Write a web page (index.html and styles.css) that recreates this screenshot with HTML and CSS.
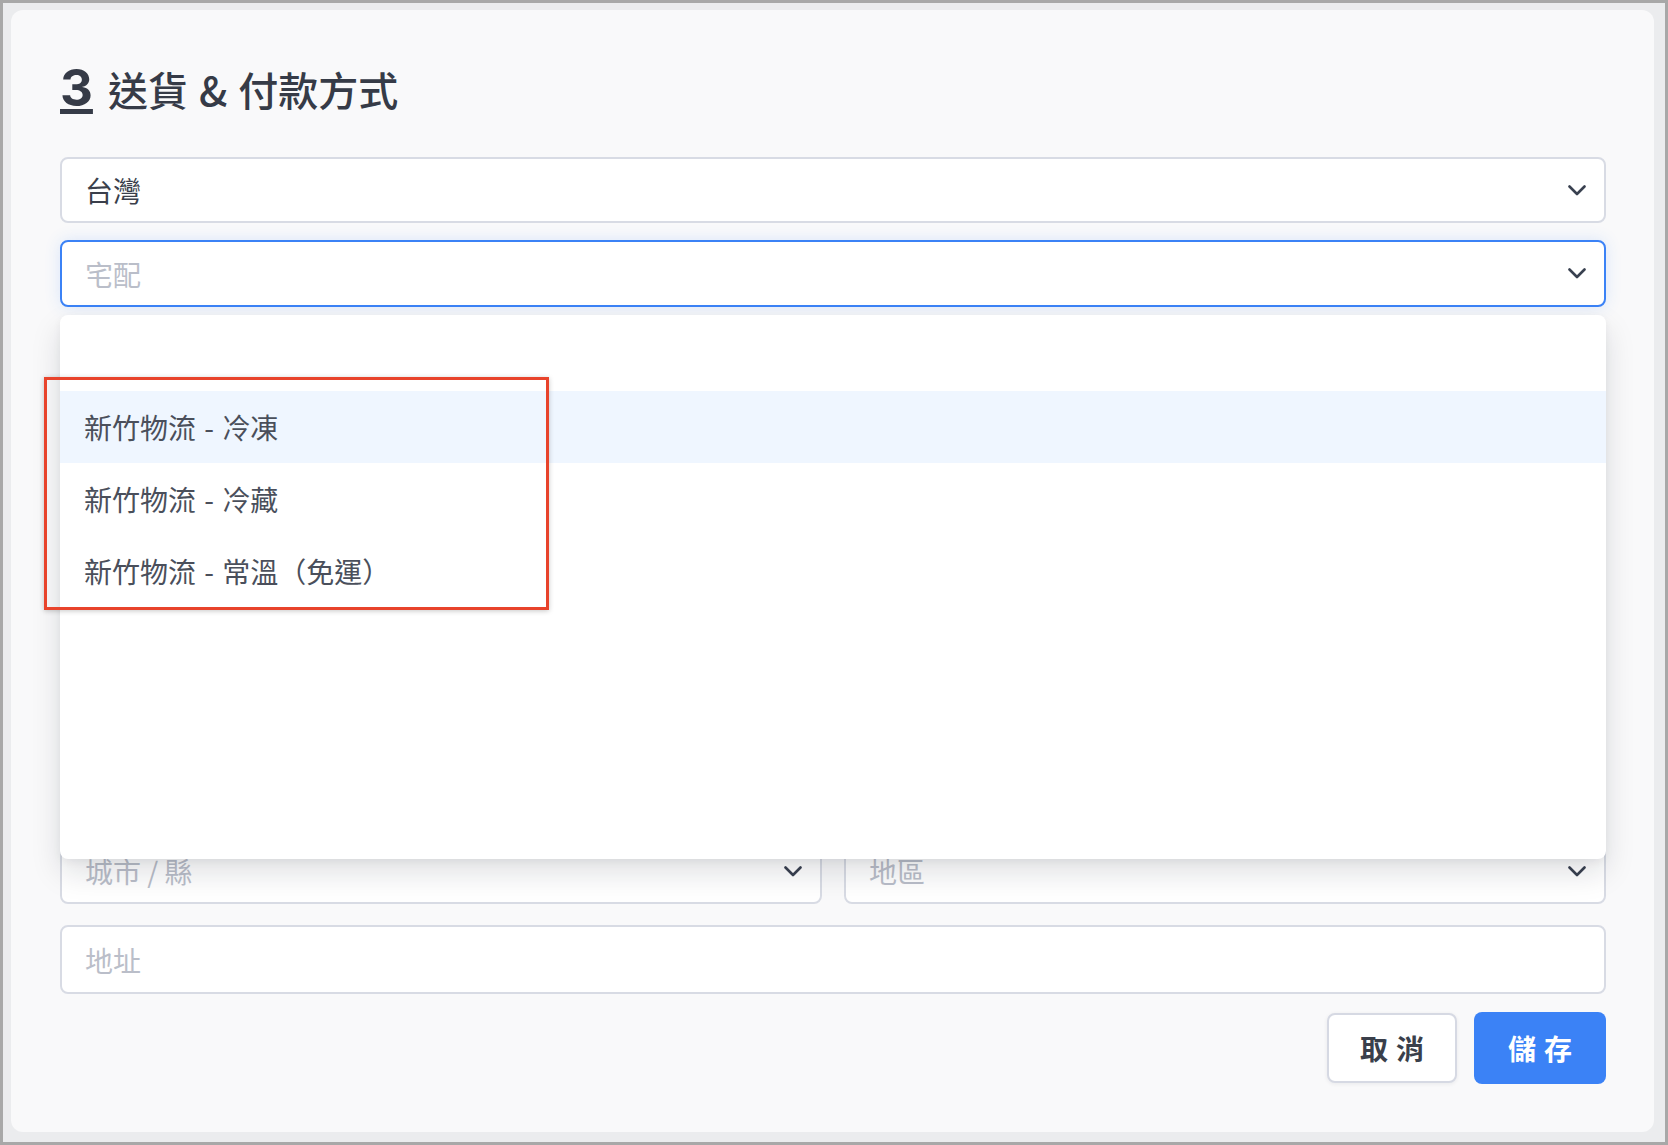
FILE: index.html
```html
<!DOCTYPE html>
<html lang="zh-Hant">
<head>
<meta charset="utf-8">
<title>送貨 &amp; 付款方式</title>
<link rel="stylesheet" href="styles.css">
</head>
<body>
<div class="frame">
  <div class="card">
    <h2 class="title"><span class="num">3</span><span class="title-text">送貨 &amp; 付款方式</span></h2>
    <div class="fields">
      <div class="select">
        <span class="value">台灣</span>
        <svg class="chev" width="18" height="11" viewBox="0 0 18 11"><path d="M1.5 1.5 L9 9 L16.5 1.5"/></svg>
      </div>
      <div class="select-wrap">
        <div class="select focused">
          <span class="placeholder">宅配</span>
          <svg class="chev" width="18" height="11" viewBox="0 0 18 11"><path d="M1.5 1.5 L9 9 L16.5 1.5"/></svg>
        </div>
        <ul class="menu">
          <li class="opt"></li>
          <li class="opt active">新竹物流 - 冷凍</li>
          <li class="opt">新竹物流 - 冷藏</li>
          <li class="opt">新竹物流 - 常溫（免運）</li>
        </ul>
      </div>
      <div class="select">
        <span class="placeholder">付款方式</span>
        <svg class="chev" width="18" height="11" viewBox="0 0 18 11"><path d="M1.5 1.5 L9 9 L16.5 1.5"/></svg>
      </div>
      <div class="spacer"></div>
      <div class="input"><span class="placeholder">收件人姓名</span></div>
      <div class="input"><span class="placeholder">手機號碼</span></div>
      <div class="input"><span class="placeholder">電子郵件</span></div>
      <div class="row2">
        <div class="select">
          <span class="placeholder">城市 / 縣</span>
          <svg class="chev" width="18" height="11" viewBox="0 0 18 11"><path d="M1.5 1.5 L9 9 L16.5 1.5"/></svg>
        </div>
        <div class="select">
          <span class="placeholder">地區</span>
          <svg class="chev" width="18" height="11" viewBox="0 0 18 11"><path d="M1.5 1.5 L9 9 L16.5 1.5"/></svg>
        </div>
      </div>
      <div class="input address"><span class="placeholder">地址</span></div>
    </div>
    <div class="actions">
      <button class="btn btn-cancel">取消</button>
      <button class="btn btn-save">儲存</button>
    </div>
  </div>
  <div class="annot"></div>
</div>
</body>
</html>
```

FILE: styles.css
```css
html, body {
  margin: 0;
  padding: 0;
}

body {
  font-family: "Noto Sans CJK TC", "Noto Sans", sans-serif;
  color: #374151;
}

.frame {
  position: relative;
  box-sizing: border-box;
  width: 1668px;
  height: 1145px;
  border: 3px solid #a8a8a8;
  background: #ebecee;
  padding: 7px 11px 10px 8px;
  display: flex;
  flex-direction: column;
}

.card {
  flex: 1;
  background: #f9f9fa;
  border-radius: 12px;
  padding: 48px 48px 0 49px;
  display: flex;
  flex-direction: column;
}

.title {
  box-sizing: border-box;
  height: 99px;
  margin: 0;
  font-size: 40px;
  line-height: 60px;
  font-weight: 500;
  color: #363b47;
  white-space: nowrap;
}

.title-text {
  word-spacing: 2px;
}

.num {
  font-family: Inter, "Liberation Sans", sans-serif;
  font-size: 51px;
  font-weight: 700;
  text-decoration: underline;
  text-decoration-thickness: 5px;
  text-underline-offset: 3px;
  margin-right: 15px;
}

.fields {
  display: flex;
  flex-direction: column;
  gap: 17px;
}

.select,
.input {
  box-sizing: border-box;
  height: 66px;
  background: #ffffff;
  border: 2px solid #d8dbe4;
  border-radius: 8px;
  padding: 0 18px 0 23px;
  display: flex;
  align-items: center;
  justify-content: space-between;
  font-size: 28px;
}

.value {
  color: #3a3f4b;
}

.placeholder {
  color: #babec9;
}

.chev {
  flex: none;
  fill: none;
  stroke: #394150;
  stroke-width: 2.6;
  stroke-linecap: round;
  stroke-linejoin: round;
}

.select-wrap {
  position: relative;
}

.select.focused {
  height: 67px;
  border-color: #3b82f6;
  box-shadow: 0 0 16px rgba(59, 130, 246, 0.16);
}

.menu {
  position: absolute;
  z-index: 10;
  top: calc(100% + 8px);
  left: 0;
  right: 0;
  box-sizing: border-box;
  height: 544px;
  margin: 0;
  padding: 4px 0;
  list-style: none;
  background: #ffffff;
  border-radius: 8px;
  box-shadow: 0 14px 30px rgba(17, 24, 39, 0.13), 0 3px 8px rgba(17, 24, 39, 0.05);
}

.opt {
  height: 72px;
  padding-left: 24px;
  display: flex;
  align-items: center;
  font-size: 28px;
  color: #4a4f5b;
  word-spacing: 2px;
}

.opt.active {
  background: #eff6ff;
}

.spacer {
  height: 151px;
}

.row2 {
  margin-top: 14px;
  display: grid;
  grid-template-columns: 1fr 1fr;
  gap: 22px;
}

.address {
  height: 69px;
  margin-top: 4px;
}

.actions {
  margin-top: 18px;
  display: flex;
  justify-content: flex-end;
  align-items: center;
  gap: 17px;
}

.btn {
  box-sizing: border-box;
  border-radius: 8px;
  font-family: "Noto Sans CJK TC", sans-serif;
  font-size: 28px;
  font-weight: 700;
  letter-spacing: 8px;
  padding: 0 0 0 8px;
  display: flex;
  align-items: center;
  justify-content: center;
  cursor: pointer;
}

.btn-cancel {
  width: 130px;
  height: 70px;
  background: #ffffff;
  border: 2px solid #d6d9e3;
  color: #3a3f4b;
  box-shadow: 0 1px 4px rgba(17, 24, 39, 0.07);
}

.btn-save {
  width: 132px;
  height: 72px;
  background: #3b82f6;
  border: none;
  color: #ffffff;
}

.annot {
  position: absolute;
  z-index: 20;
  left: 41px;
  top: 374px;
  width: 505px;
  height: 233px;
  box-sizing: border-box;
  border: 3px solid #e8432b;
  box-shadow: 0 1px 5px rgba(0, 0, 0, 0.22);
  pointer-events: none;
}
```
